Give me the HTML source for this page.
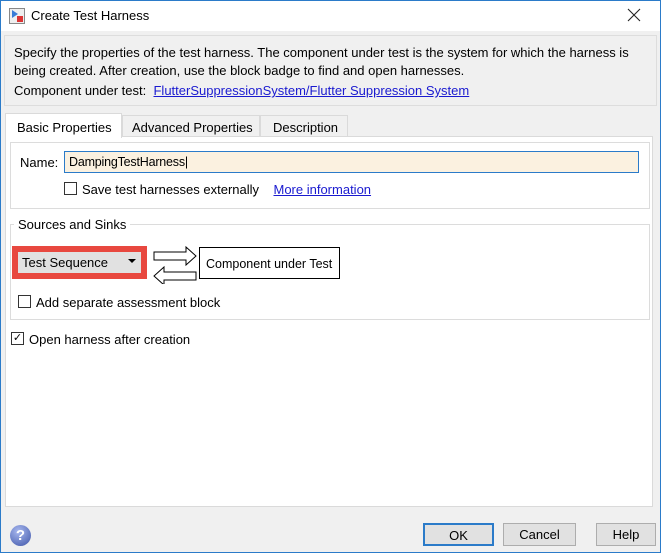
<!DOCTYPE html>
<html><head><style>
*{box-sizing:border-box;margin:0;padding:0}
body{width:661px;height:553px;overflow:hidden;background:#f0f0f0;font-family:"Liberation Sans",sans-serif;font-size:12.5px;color:#000;position:relative}
.a{position:absolute}
.win{left:0;top:0;width:661px;height:553px;border:1px solid #2b7bc9;border-top:1px solid #2b7bc9}
a{color:#1a1ad0;text-decoration:underline}
.cb{width:13px;height:13px;border:1px solid #333;background:#fff}
.btn{height:23px;border:1px solid #adadad;background:#e1e1e1;text-align:center;line-height:21px;font-size:13px}
</style></head><body>
<div class="a win"></div>
<div class="a" style="left:1px;top:1px;width:659px;height:30px;background:#fff"></div>
<div class="a" style="left:9px;top:8px;width:16px;height:16px;border:1px solid #888;background:#eee"></div>
<div class="a" style="left:12px;top:10px;width:0;height:0;border-left:6px solid #3a7bd5;border-top:4px solid transparent;border-bottom:4px solid transparent"></div>
<div class="a" style="left:17px;top:16px;width:6px;height:6px;background:#d33"></div>
<div class="a" style="left:31px;top:8px;font-size:13px">Create Test Harness</div>
<svg class="a" style="left:627px;top:8px" width="14" height="14"><path d="M1 1L13 13M13 1L1 13" stroke="#222" stroke-width="1.1"/></svg>
<div class="a" style="left:4px;top:35px;width:653px;height:71px;border:1px solid #ddd;background:#f0f0f0"></div>
<div class="a" style="left:14px;top:44px;line-height:18px;font-size:13px">Specify the properties of the test harness. The component under test is the system for which the harness is<br>being created. After creation, use the block badge to find and open harnesses.</div>
<div class="a" style="left:14px;top:83px;font-size:13px">Component under test:&nbsp; <a>FlutterSuppressionSystem/Flutter Suppression System</a></div>
<div class="a" style="left:5px;top:136px;width:648px;height:371px;background:#fff;border:1px solid #dadada"></div>
<div class="a" style="left:5px;top:113px;width:117px;height:25px;background:#fff;border:1px solid #dadada;border-bottom:none;padding:6px 0 0 11px;font-size:13px">Basic Properties</div>
<div class="a" style="left:122px;top:115px;width:138px;height:22px;background:#f0f0f0;border:1px solid #dadada;padding:4px 0 0 9px;font-size:13px">Advanced Properties</div>
<div class="a" style="left:260px;top:115px;width:88px;height:22px;background:#f0f0f0;border:1px solid #dadada;padding:4px 0 0 12px;font-size:13px">Description</div>
<div class="a" style="left:10px;top:142px;width:640px;height:67px;border:1px solid #dcdcdc"></div>
<div class="a" style="left:20px;top:155px;font-size:13px">Name:</div>
<div class="a" style="left:64px;top:151px;width:575px;height:22px;background:#fbf1e0;border:1px solid #2b7bc9;padding:3px 0 0 4px;font-size:12.5px;letter-spacing:-0.2px">DampingTestHarness|</div>
<div class="a cb" style="left:64px;top:182px"></div>
<div class="a" style="left:82px;top:182px;font-size:13px">Save test harnesses externally&nbsp;&nbsp;&nbsp; <a>More information</a></div>
<div class="a" style="left:10px;top:224px;width:640px;height:96px;border:1px solid #dcdcdc"></div>
<div class="a" style="left:14px;top:217px;background:#fff;padding:0 4px;font-size:13px">Sources and Sinks</div>
<div class="a" style="left:12px;top:246px;width:135px;height:33px;background:#e8483f"></div>
<div class="a" style="left:18px;top:252px;width:123px;height:21px;background:#e1e1e1;padding:3px 0 0 4px;font-size:13px">Test Sequence</div>
<div class="a" style="left:128px;top:259px;width:0;height:0;border-top:4px solid #000;border-left:4px solid transparent;border-right:4px solid transparent"></div>
<svg class="a" style="left:152px;top:244px" width="46" height="40"><path d="M2 8h32v-5l10 9-10 9v-5H2z M44 28H12v-5L2 32l10 9v-5h32z" fill="#fff" stroke="#000"/></svg>
<div class="a" style="left:199px;top:247px;width:141px;height:32px;border:1.5px solid #000;background:#fff;padding:9px 0 0 6px;font-size:12.5px">Component under Test</div>
<div class="a cb" style="left:18px;top:295px"></div>
<div class="a" style="left:36px;top:295px;font-size:13px">Add separate assessment block</div>
<div class="a cb" style="left:11px;top:332px;font-size:11px;line-height:11px;text-align:center">✓</div>
<div class="a" style="left:29px;top:332px;font-size:13px">Open harness after creation</div>
<div class="a" style="left:10px;top:525px;width:21px;height:21px;border-radius:50%;background:radial-gradient(circle at 40% 30%,#a8b8ef,#3e55a8);color:#fff;font-weight:bold;text-align:center;line-height:21px;font-size:15px">?</div>
<div class="a btn" style="left:423px;top:523px;width:71px;border:2px solid #2b7bc9">OK</div>
<div class="a btn" style="left:503px;top:523px;width:73px">Cancel</div>
<div class="a btn" style="left:596px;top:523px;width:60px">Help</div>
</body></html>
